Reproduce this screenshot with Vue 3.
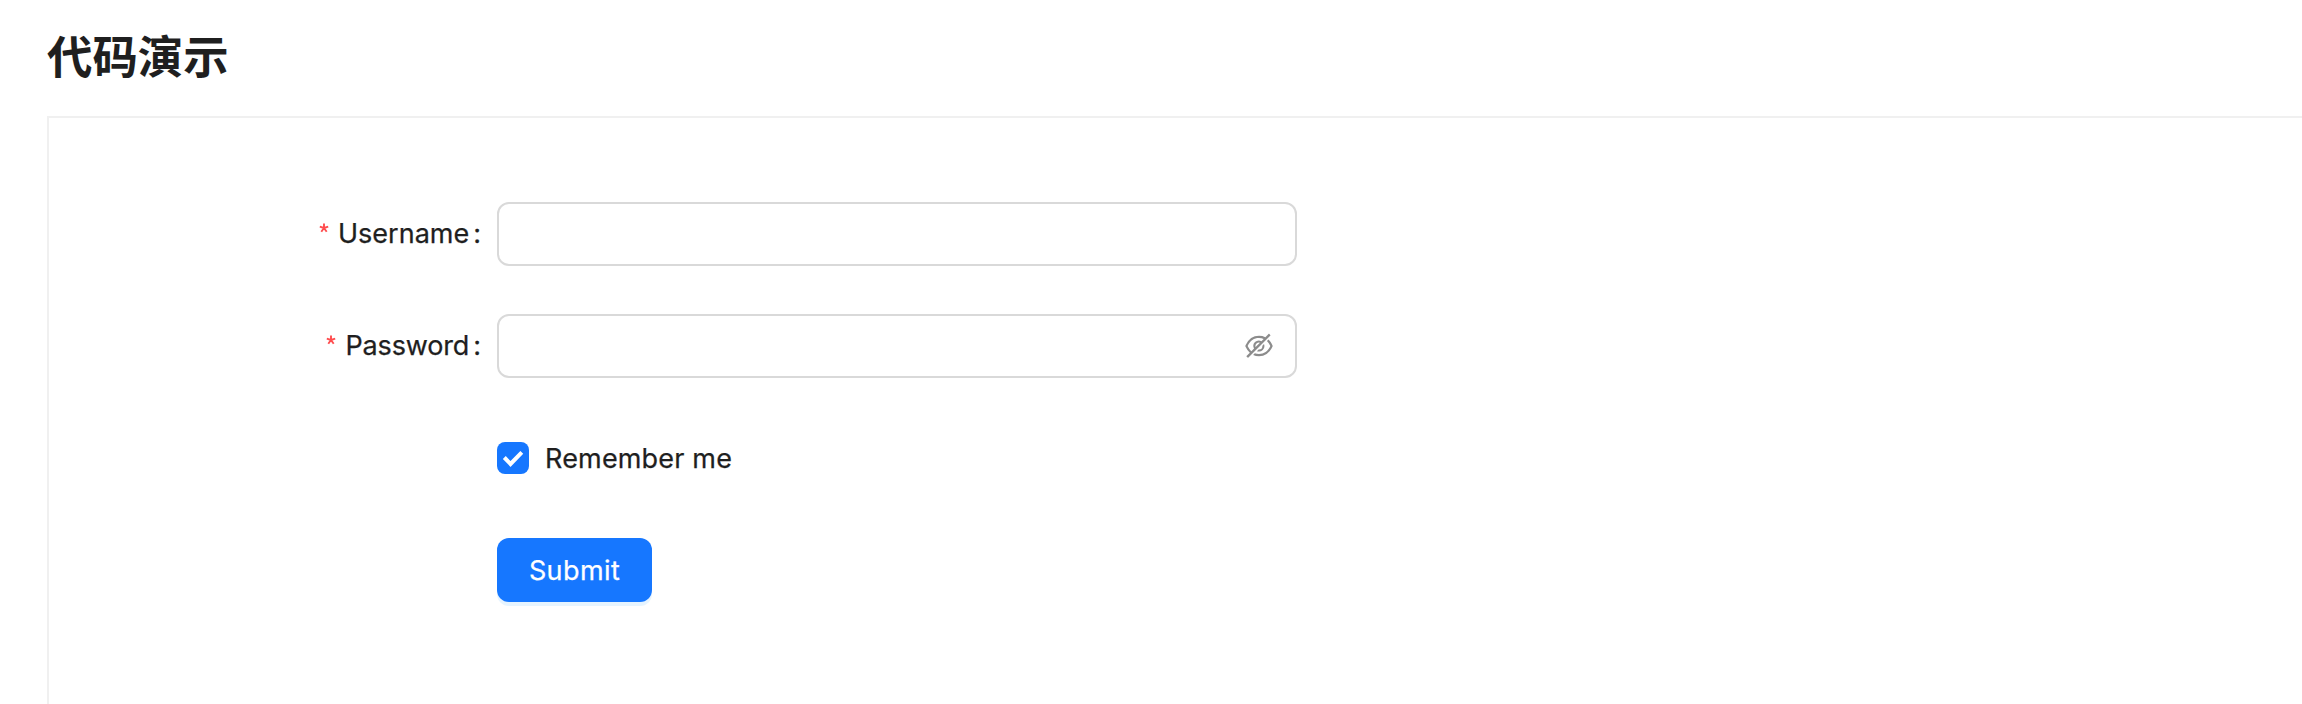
<script setup>
import { ref } from 'vue'

const username = ref('')
const password = ref('')
const remember = ref(true)
</script>

<template>
  <main class="page">
    <h2 class="title">代码演示</h2>
    <section class="demo">
      <form class="form" @submit.prevent>
        <div class="row">
          <label class="label" for="username">
            <svg class="required" viewBox="0 0 10 10"><path d="M5 5V.6M5 5L.8 3.7M5 5l4.2-1.3M5 5L2.3 8.7M5 5l2.7 3.7" /></svg>
            <span class="name">Username</span><span class="colon">:</span>
          </label>
          <div class="field"><input id="username" v-model="username" type="text" /></div>
        </div>
        <div class="row">
          <label class="label" for="password">
            <svg class="required" viewBox="0 0 10 10"><path d="M5 5V.6M5 5L.8 3.7M5 5l4.2-1.3M5 5L2.3 8.7M5 5l2.7 3.7" /></svg>
            <span class="name tight">Password</span><span class="colon">:</span>
          </label>
          <div class="field">
            <input id="password" v-model="password" type="password" />
            <svg class="eye" viewBox="64 64 896 896">
              <path d="M942.2 486.2Q889.47 375.11 816.7 305l-50.88 50.88C807.31 395.53 843.45 447.4 874.7 512 791.5 684.2 673.4 766 512 766q-72.67 0-133.87-22.38L323 798.75Q408 838 512 838q288.3 0 430.2-300.3a60.29 60.29 0 000-51.5zm-63.57-320.64L836 122.88a8 8 0 00-11.32 0L715.31 232.2Q624.86 186 512 186q-288.3 0-430.2 300.3a60.3 60.3 0 000 51.5q56.69 119.4 136.5 191.41L112.48 835a8 8 0 000 11.31L155.17 889a8 8 0 0011.31 0l712.15-712.12a8 8 0 000-11.32zM149.3 512C232.6 339.8 350.7 258 512 258c54.54 0 104.13 9.36 149.12 28.39l-70.3 70.3a176 176 0 00-238.13 238.13l-83.42 83.42C223.1 637.49 183.3 582.28 149.3 512zm246.7 0a112.11 112.11 0 01146.2-106.69L401.31 546.2A112 112 0 01396 512z" />
              <path d="M508 624c-3.46 0-6.87-.16-10.25-.47l-52.82 52.82a176.09 176.09 0 00227.42-227.42l-52.82 52.82c.31 3.38.47 6.79.47 10.25a111.94 111.94 0 01-112 112z" />
            </svg>
          </div>
        </div>
        <div class="row offset">
          <div class="check" @click="remember = !remember">
            <span class="box" :class="{ on: remember }">
              <svg v-if="remember" viewBox="0 0 32 32"><path d="M7.3 15.5l6.2 6.5L24.8 10.4" /></svg>
            </span>
            <span class="check-text">Remember me</span>
          </div>
        </div>
        <div class="row offset">
          <button class="submit" type="submit"><span>Submit</span></button>
        </div>
      </form>
    </section>
  </main>
</template>

<style>
body {
  background: #fff;
  overflow: hidden;
}
</style>

<style scoped>
.page {
  box-sizing: border-box;
  height: 704px;
  padding: 24px 0 0 47px;
  overflow: hidden;
  color: #1f1f1f;
  font-family: Inter, "Noto Sans CJK SC", sans-serif;
}
.title {
  height: 60px;
  margin: 0 0 32px;
  font: 700 45.4px/60px "Noto Sans CJK SC", sans-serif;
}
.demo {
  box-sizing: border-box;
  height: 700px;
  padding-top: 84px;
  border: solid #f0f0f0;
  border-width: 2px 0 0 2px;
}
.form {
  display: flex;
  flex-direction: column;
  gap: 48px;
  width: 1248px;
}
.row {
  display: flex;
  height: 64px;
}
.offset {
  padding-left: 448px;
}
.label {
  display: flex;
  align-items: center;
  justify-content: flex-end;
  box-sizing: border-box;
  width: 448px;
  padding-right: 16px;
  font-size: 27px;
  line-height: 64px;
}
.name,
.colon,
.check-text {
  -webkit-text-stroke: 0.25px currentColor;
}
.tight {
  letter-spacing: -0.15px;
}
.required {
  width: 10px;
  height: 10px;
  margin: 0 9px 12px 0;
  overflow: visible;
  fill: none;
  stroke: #ff4d4f;
  stroke-width: 1.9;
}
.colon {
  margin-left: 4px;
}
.field {
  display: flex;
  align-items: center;
  box-sizing: border-box;
  width: 800px;
  padding: 0 22px;
  border: 2px solid #d9d9d9;
  border-radius: 12px;
}
.field input {
  flex: 1;
  min-width: 0;
  padding: 0;
  border: 0;
  outline: 0;
  background: transparent;
  font: 27px Inter, sans-serif;
}
.eye {
  width: 28px;
  height: 28px;
  fill: #8c8c8c;
}
.check {
  display: flex;
  align-items: center;
  gap: 16px;
  font-size: 27px;
  letter-spacing: 0.17px;
}
.box {
  box-sizing: border-box;
  width: 32px;
  height: 32px;
  border: 2px solid #d9d9d9;
  border-radius: 8px;
}
.box.on {
  border: 0;
  background: #1677ff;
}
.box svg {
  display: block;
  fill: none;
  stroke: #fff;
  stroke-width: 4;
}
.submit {
  width: 155px;
  height: 64px;
  padding: 0;
  border: 0;
  border-radius: 12px;
  background: #1677ff;
  box-shadow: 0 4px 0 rgba(5, 145, 255, 0.1);
  color: #fff;
  font: 27px Inter, sans-serif;
  letter-spacing: 0.4px;
  -webkit-text-stroke: 0.25px #fff;
}
</style>
